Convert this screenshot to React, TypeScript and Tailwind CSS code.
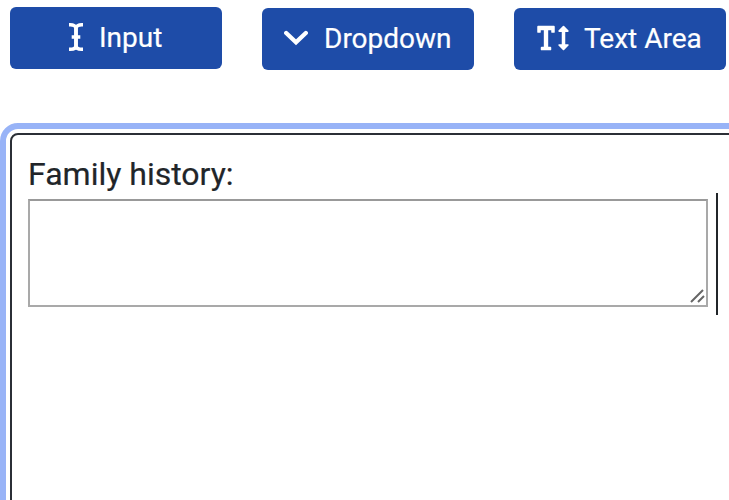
import type { ReactNode } from "react";
import { FaTextHeight } from "react-icons/fa";

function ToolButton({ icon, label, className }: { icon: ReactNode; label: string; className: string }) {
  return (
    <button
      className={`flex h-[62px] w-[212px] shrink-0 items-center rounded-md bg-[#1e4ca8] text-[28px] leading-none text-white ${className}`}
    >
      {icon}
      <span className="whitespace-nowrap [-webkit-text-stroke:0.2px_currentColor]">{label}</span>
    </button>
  );
}

function CursorIcon() {
  return (
    <svg className="mb-[3px] h-7 w-[14px] shrink-0" viewBox="0 0 14 28" fill="none" stroke="currentColor" strokeWidth="3.6">
      <path d="M0 1.8h1.2C4.4 1.8 7 3 7 5.6v16.8c0 2.6-2.6 3.8-5.8 3.8H0" />
      <path d="M14 1.8h-1.2C9.6 1.8 7 3 7 5.6v16.8c0 2.6 2.6 3.8 5.8 3.8H14M2.7 14h8.6" />
    </svg>
  );
}

function ChevronIcon() {
  return (
    <svg className="-mt-0.5 h-7 w-6 shrink-0" viewBox="0 0 24 28" fill="none" stroke="currentColor" strokeWidth="4.3" strokeLinecap="round">
      <path d="M2.2 9 12 18.2 21.8 9" />
    </svg>
  );
}

export default function App() {
  return (
    <div className="h-[500px] w-[729px] overflow-hidden bg-white font-[Roboto,sans-serif] text-[#212529]">
      <div className="flex gap-10 pt-2 pl-[10px]">
        <ToolButton className="-mt-px gap-4 pl-[59px]" icon={<CursorIcon />} label="Input" />
        <ToolButton className="gap-4 pl-[22px]" icon={<ChevronIcon />} label="Dropdown" />
        <ToolButton
          className="gap-[15px] pl-[23px]"
          icon={<FaTextHeight className="mb-[3px] h-7 w-8 shrink-0" />}
          label="Text Area"
        />
      </div>
      <div className="mt-[53px] h-[420px] w-[800px] rounded-[18px] border-[6px] border-[#98b3f7] p-1">
        <div className="h-full rounded-lg border-2 border-[#2b2f36] pt-[18px] pl-4">
          <label className="block h-[46px] text-[32px] leading-[42px] [-webkit-text-stroke:0.2px_currentColor]">
            Family history:
          </label>
          <div className="-mt-[6px] flex items-start gap-2">
            <div className="mt-[6px] flex h-[108px] w-[680px] items-end justify-end border-2 border-[#a9a9a9] border-t-[#999999] pr-px pb-[2px]">
              <svg width="15" height="14" viewBox="0 0 15 14" fill="none" stroke="#666" strokeWidth="2">
                <path d="M1 13 13 1M8 13l6-6" />
              </svg>
            </div>
            <div className="h-[122px] w-[2px] bg-[#212529]" />
          </div>
        </div>
      </div>
    </div>
  );
}
